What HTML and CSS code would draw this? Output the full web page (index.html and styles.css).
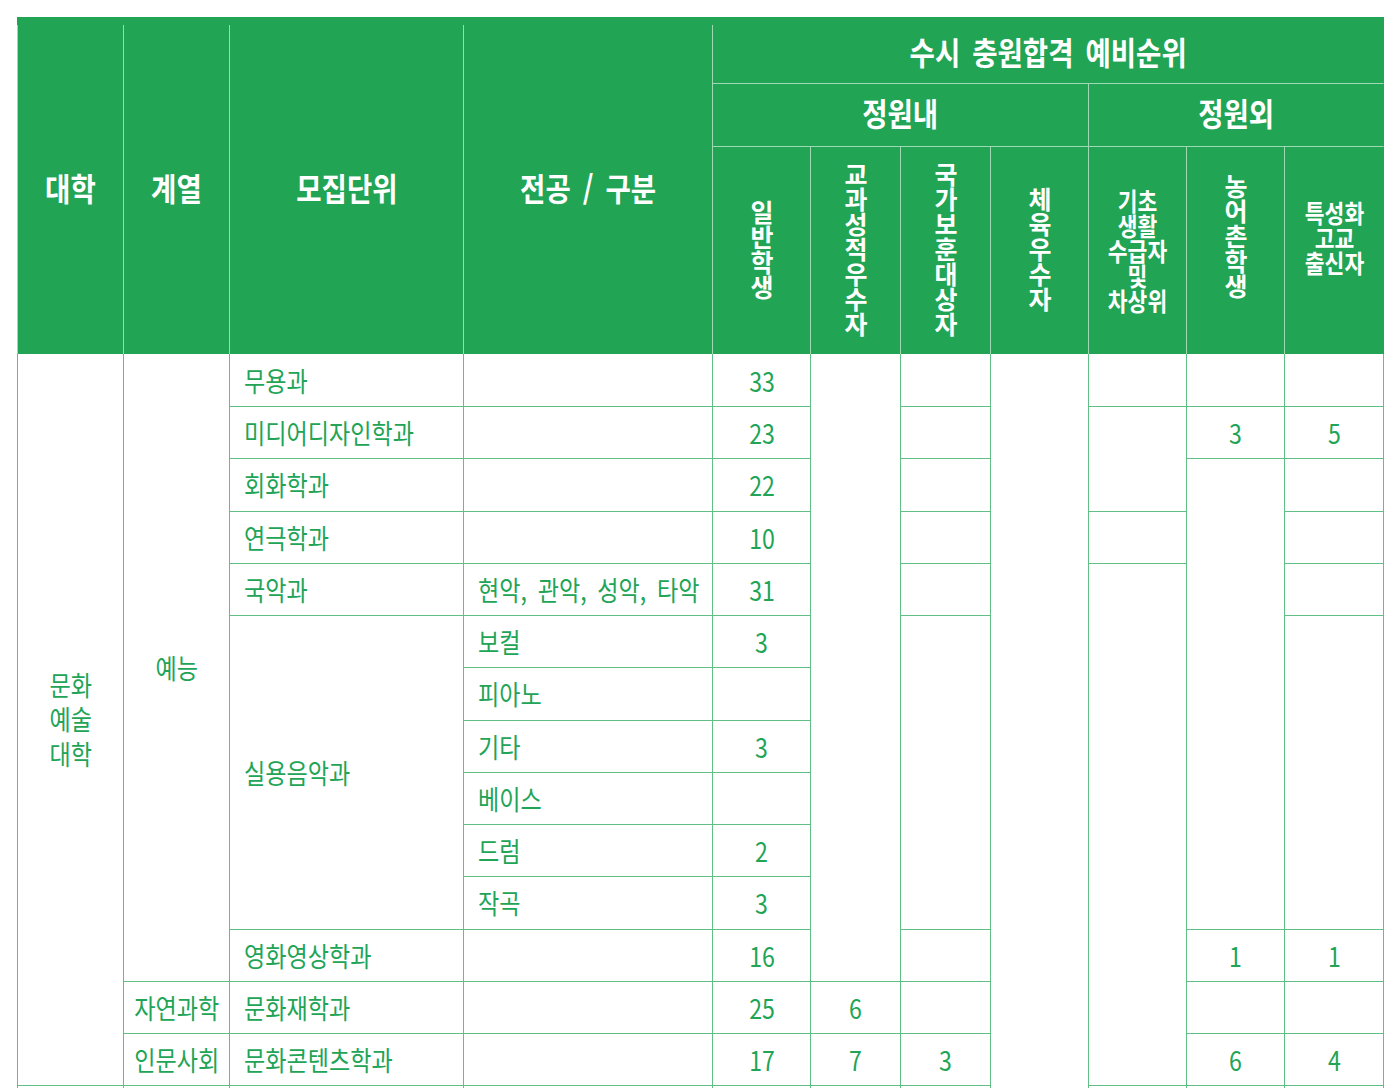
FILE: index.html
```html
<!DOCTYPE html>
<html lang="ko">
<head>
<meta charset="utf-8">
<title>수시 충원합격 예비순위</title>
<link rel="stylesheet" href="styles.css">
</head>
<body>
<div class="page">
<table class="quota">
  <colgroup>
    <col class="c-a"><col class="c-b"><col class="c-c"><col class="c-d">
    <col class="c-e"><col class="c-f"><col class="c-g"><col class="c-h">
    <col class="c-i"><col class="c-j"><col class="c-k">
  </colgroup>
  <thead>
    <tr class="h1">
      <th rowspan="3" class="first lift"><span class="t">대학</span></th>
      <th rowspan="3" class="lift"><span class="t">계열</span></th>
      <th rowspan="3" class="lift"><span class="t">모집단위</span></th>
      <th rowspan="3" class="lift"><span class="t">전공 / 구분</span></th>
      <th colspan="7" class="bb last lift"><span class="t">수시 충원합격 예비순위</span></th>
    </tr>
    <tr class="h2">
      <th colspan="4" class="bb lift"><span class="t">정원내</span></th>
      <th colspan="3" class="bb last lift"><span class="t">정원외</span></th>
    </tr>
    <tr class="h3">
      <th><span class="vt">일반학생</span></th>
      <th><span class="vt">교과성적우수자</span></th>
      <th><span class="vt">국가보훈대상자</span></th>
      <th><span class="vt">체육우수자</span></th>
      <th><span class="st">기초<br>생활<br>수급자<br>및<br>차상위</span></th>
      <th class="up"><span class="vt">농어촌학생</span></th>
      <th class="up last"><span class="st">특성화<br>고교<br>출신자</span></th>
    </tr>
  </thead>
  <tbody>
    <tr class="r1">
      <td rowspan="14" class="first col-a"><span class="t">문화<br>예술<br>대학</span></td>
      <td rowspan="12"><span class="t">예능</span></td>
      <td class="l"><span class="t">무용과</span></td>
      <td></td>
      <td><span class="t">33</span></td>
      <td rowspan="12"></td>
      <td></td>
      <td rowspan="15"></td>
      <td></td>
      <td></td>
      <td></td>
    </tr>
    <tr>
      <td class="l"><span class="t">미디어디자인학과</span></td>
      <td></td>
      <td><span class="t">23</span></td>
      <td></td>
      <td rowspan="2"></td>
      <td><span class="t">3</span></td>
      <td><span class="t">5</span></td>
    </tr>
    <tr>
      <td class="l"><span class="t">회화학과</span></td>
      <td></td>
      <td><span class="t">22</span></td>
      <td></td>
      <td rowspan="9"></td>
      <td></td>
    </tr>
    <tr>
      <td class="l"><span class="t">연극학과</span></td>
      <td></td>
      <td><span class="t">10</span></td>
      <td></td>
      <td></td>
      <td></td>
    </tr>
    <tr>
      <td class="l"><span class="t">국악과</span></td>
      <td class="l"><span class="t">현악, 관악, 성악, 타악</span></td>
      <td><span class="t">31</span></td>
      <td></td>
      <td rowspan="10"></td>
      <td></td>
    </tr>
    <tr>
      <td rowspan="6" class="l"><span class="t">실용음악과</span></td>
      <td class="l"><span class="t">보컬</span></td>
      <td><span class="t">3</span></td>
      <td rowspan="6"></td>
      <td rowspan="6"></td>
    </tr>
    <tr>
      <td class="l"><span class="t">피아노</span></td>
      <td></td>
    </tr>
    <tr>
      <td class="l"><span class="t">기타</span></td>
      <td><span class="t">3</span></td>
    </tr>
    <tr>
      <td class="l"><span class="t">베이스</span></td>
      <td></td>
    </tr>
    <tr>
      <td class="l"><span class="t">드럼</span></td>
      <td><span class="t">2</span></td>
    </tr>
    <tr>
      <td class="l"><span class="t">작곡</span></td>
      <td><span class="t">3</span></td>
    </tr>
    <tr>
      <td class="l"><span class="t">영화영상학과</span></td>
      <td></td>
      <td><span class="t">16</span></td>
      <td></td>
      <td><span class="t">1</span></td>
      <td><span class="t">1</span></td>
    </tr>
    <tr>
      <td><span class="t">자연과학</span></td>
      <td class="l"><span class="t">문화재학과</span></td>
      <td></td>
      <td><span class="t">25</span></td>
      <td><span class="t">6</span></td>
      <td></td>
      <td></td>
      <td></td>
    </tr>
    <tr>
      <td><span class="t">인문사회</span></td>
      <td class="l"><span class="t">문화콘텐츠학과</span></td>
      <td></td>
      <td><span class="t">17</span></td>
      <td><span class="t">7</span></td>
      <td><span class="t">3</span></td>
      <td><span class="t">6</span></td>
      <td><span class="t">4</span></td>
    </tr>
    <tr>
      <td class="first"></td>
      <td></td>
      <td></td>
      <td></td>
      <td></td>
      <td></td>
      <td></td>
      <td></td>
      <td></td>
      <td></td>
    </tr>
  </tbody>
</table>
</div>
</body>
</html>
```

FILE: styles.css
```css
html {
  overflow: hidden;
}

body {
  margin: 0;
  background: #ffffff;
  font-family: "Noto Sans CJK KR", "Noto Sans", sans-serif;
}

.page {
  padding: 17px 0 0 17px;
}

.quota {
  border-collapse: separate;
  border-spacing: 0;
  table-layout: fixed;
  width: 1367px;
  border-top: 8px solid #22a455;
}

.c-a { width: 107px; }
.c-b { width: 106px; }
.c-c { width: 234px; }
.c-d { width: 249px; }
.c-e { width: 98px; }
.c-f { width: 90px; }
.c-g { width: 90px; }
.c-h { width: 98px; }
.c-i { width: 98px; }
.c-j { width: 98px; }
.c-k { width: 99px; }

/* header */
.quota th {
  background: #22a455;
  color: #ffffff;
  font-weight: 700;
  font-size: 32px;
  line-height: 1;
  padding: 0;
  text-align: center;
  vertical-align: middle;
  border-right: 1px solid #9fd9b4;
  border-bottom: 0;
  white-space: nowrap;
}

.quota th.lift {
  padding-bottom: 6px;
}

.quota th.first {
  border-left: 1px solid #9fd9b4;
}

.quota th.last {
  border-right-color: #22a455;
}

.quota th.bb {
  border-bottom: 1px solid #9fd9b4;
}

.h1 { height: 59px; }
.h2 { height: 63px; }
.h3 { height: 207px; }

.quota th .t {
  display: inline-block;
  word-spacing: 5px;
  transform: scaleX(0.86);
}

.vt {
  display: inline-block;
  writing-mode: vertical-rl;
  text-orientation: upright;
  font-size: 25px;
  line-height: 1;
}

.st {
  display: inline-block;
  font-size: 25px;
  line-height: 25px;
  transform: scaleX(0.86);
}

.quota th.up {
  padding-bottom: 26px;
}

/* body */
.quota td {
  color: #21a456;
  font-size: 27px;
  font-weight: 400;
  line-height: 1;
  padding: 0;
  text-align: center;
  vertical-align: middle;
  border-right: 1px solid #5fbf84;
  border-bottom: 1px solid #5fbf84;
  white-space: nowrap;
}

.quota td.first {
  border-left: 1px solid #5fbf84;
}

.quota tbody tr { height: 52.25px; }
.quota tbody tr.r1 { height: 53px; }

.quota td .t {
  display: inline-block;
  word-spacing: 5px;
  transform: scaleX(0.855);
}

.quota td.l {
  text-align: left;
  padding-left: 14px;
}

.quota td.l .t {
  transform-origin: left center;
}

.quota td.col-a .t {
  line-height: 34.5px;
}
```
